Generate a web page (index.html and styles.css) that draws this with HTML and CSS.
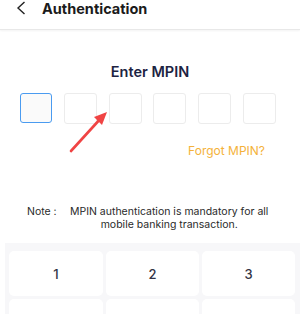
FILE: index.html
```html
<!DOCTYPE html>
<html>
<head>
<meta charset="utf-8">
<link rel="stylesheet" href="styles.css">
</head>
<body>
<div class="header">
  <svg class="back" width="10" height="14" viewBox="0 0 10 14"><path d="M8.5 1 L2 7 L8.5 13" fill="none" stroke="#222" stroke-width="1.4"/></svg>
  <span class="title">Authentication</span>
</div>
<div class="content">
  <div class="heading">Enter MPIN</div>
  <div class="pins">
    <div class="pin active"></div>
    <div class="pin"></div>
    <div class="pin"></div>
    <div class="pin"></div>
    <div class="pin"></div>
    <div class="pin"></div>
  </div>
  <div class="forgot-row"><span class="forgot">Forgot MPIN?</span></div>
  <div class="note">
    <span class="note-label">Note :</span>
    <span class="note-text">MPIN authentication is mandatory for all<br>mobile banking transaction.</span>
  </div>
</div>
<div class="keypad">
  <div class="key">1</div>
  <div class="key">2</div>
  <div class="key">3</div>
  <div class="key"></div>
  <div class="key"></div>
  <div class="key"></div>
</div>
<svg class="arrow" width="50" height="50" viewBox="0 0 50 50">
  <line x1="9" y1="41" x2="40" y2="7" stroke="#f04444" stroke-width="2.6" stroke-linecap="round"/>
  <polygon points="45,2 32,7 40,15" fill="#f04444"/>
</svg>
</body>
</html>
```
FILE: styles.css
```css
html, body {
  margin: 0;
  padding: 0;
  background: #ffffff;
  font-family: "Inter", "Liberation Sans", sans-serif;
  width: 300px;
  height: 314px;
  overflow: hidden;
}
body { position: relative; }
.header {
  height: 29px;
  display: flex;
  align-items: flex-start;
  border-bottom: 1px solid #e8e8e8;
  box-shadow: 0 1px 2px rgba(0,0,0,0.05);
  padding-left: 16px;
}
.back { margin-right: 16px; margin-top: 1px; }
.title {
  font-size: 14.5px;
  font-weight: 700;
  color: #1b1b1b;
  line-height: 17px;
}
.content { padding-top: 33px; }
.heading {
  text-align: center;
  font-size: 14.5px;
  font-weight: 600;
  color: #1d2342;
  line-height: 18px;
}
.pins {
  margin: 12px 0 0 20px;
  width: 256px;
  display: flex;
  justify-content: space-between;
}
.pin {
  width: 31px;
  height: 29px;
  border: 1px solid #ececec;
  border-radius: 3px;
  background: #fff;
}
.pin.active {
  border: 1.5px solid #4a9bf0;
  background: #fafafa;
  width: 30px;
  height: 28px;
}
.forgot-row {
  display: flex;
  justify-content: flex-end;
  padding-right: 35px;
  margin-top: 19px;
}
.forgot {
  font-size: 12px;
  color: #f4b23a;
  line-height: 16px;
}
.note {
  display: flex;
  margin-top: 46px;
  padding-left: 27px;
  font-size: 10.5px;
  color: #2a2a2a;
  line-height: 13px;
}
.note-label { width: 43px; }
.note-text { text-align: center; }
.keypad {
  margin: 12px 0 0 5px;
  background: #f7f7f9;
  padding: 8px 6px 0 4px;
  display: grid;
  grid-template-columns: 94px 93px 93px;
  column-gap: 3px;
  row-gap: 3px;
}
.key {
  background: #fff;
  border-radius: 5px;
  height: 45px;
  display: flex;
  align-items: center;
  justify-content: center;
  font-size: 13px;
  font-weight: 500;
  color: #333344;
}
.arrow {
  position: absolute;
  left: 62px;
  top: 110px;
}
```
